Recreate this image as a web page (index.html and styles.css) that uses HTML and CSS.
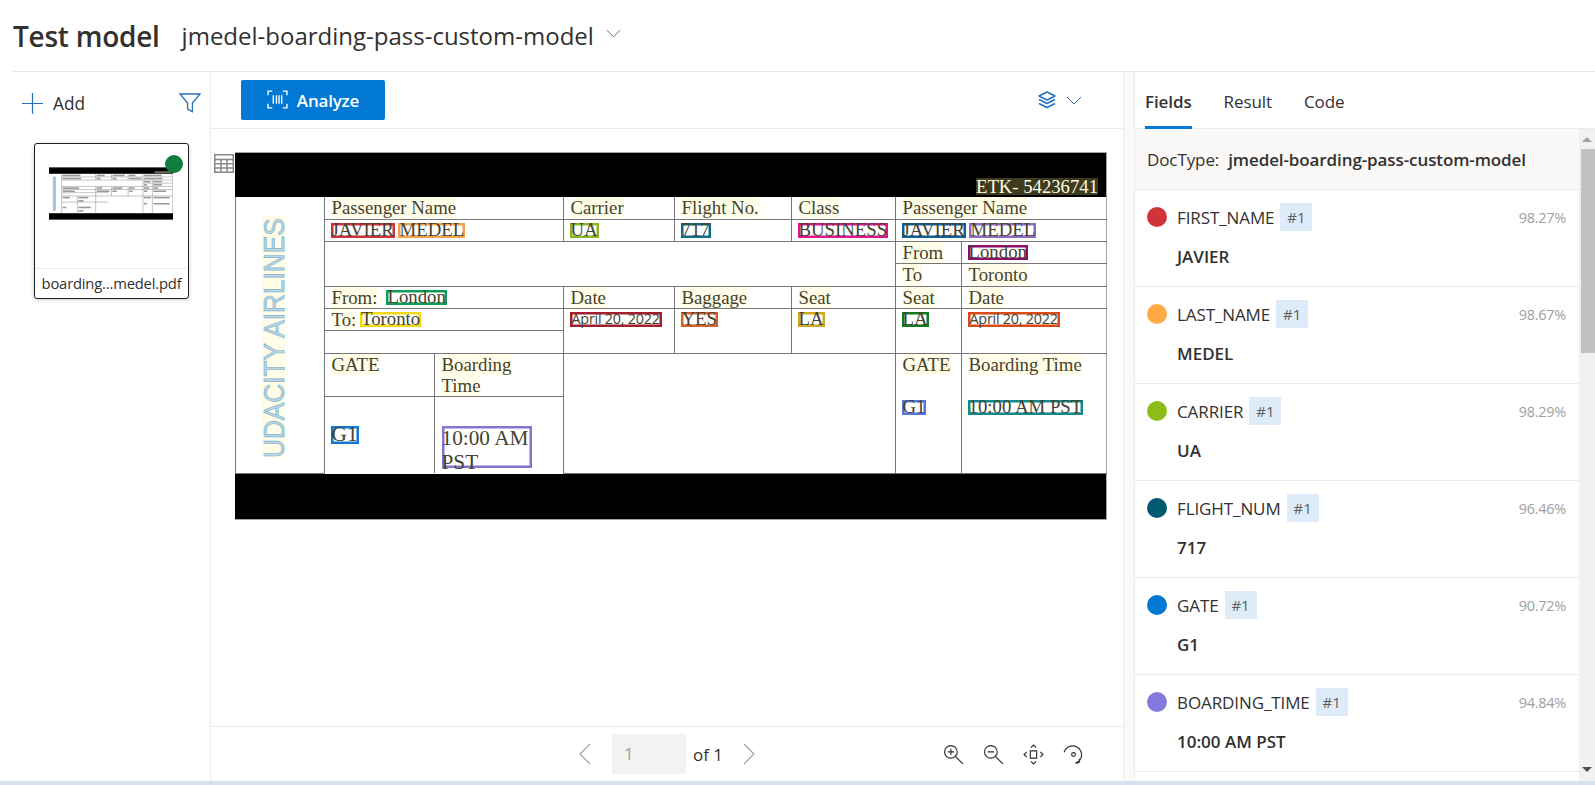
FILE: index.html
```html
<!DOCTYPE html>
<html lang="en">
<head>
<meta charset="utf-8">
<title>Test model</title>
<link rel="stylesheet" href="styles.css">
</head>
<body>
<div class="app">
  <header class="header">
    <h1 class="title">Test model</h1>
    <span class="model-name">jmedel-boarding-pass-custom-model</span>
    <svg class="model-chevron" viewBox="0 0 16 9"><path d="M1 1l7 7 7-7" fill="none" stroke="#605e5c" stroke-width="1"/></svg>
  </header>
  <main class="panes">
    <aside class="files">
      <div class="files-bar">
        <svg class="ico-plus" viewBox="0 0 22 22"><path d="M11 0v22M0 11h22" stroke="#2b6fb8" stroke-width="1.3" fill="none"/></svg>
        <span class="add-label">Add</span>
        <svg class="ico-filter" viewBox="0 0 22 20"><path d="M1 1h20l-7.6 9v8.6l-4.8-2.6v-6z" stroke="#2b6fb8" stroke-width="1.3" fill="none"/></svg>
      </div>
      <div class="card">
        <div class="thumb">
          <svg class="thumb-doc" viewBox="0 0 871 367" aria-hidden="true">
            <rect width="871" height="367" fill="#fff"/>
            <rect width="871" height="45" fill="#000"/>
            <rect y="322" width="871" height="45" fill="#000"/>
            <g stroke="#999" stroke-width="4" fill="none">
              <path d="M89 45v277M89 67h782M89 89h782M660 111h211M89 134h782M89 156h782M89 178h328M89 201h782M89 244h328M199 201v121M328 45v44M328 134v188M439 45v44M439 134v67M556 45v44M556 134v67M660 45v277M726 89v233M869 45v277"/>
            </g>
            <g fill="#666" opacity=".65">
              <rect x="96" y="51" width="125" height="11"/><rect x="96" y="73" width="130" height="11"/>
              <rect x="335" y="51" width="55" height="11"/><rect x="335" y="73" width="28" height="11"/>
              <rect x="446" y="51" width="85" height="11"/><rect x="446" y="73" width="28" height="11"/>
              <rect x="563" y="51" width="45" height="11"/><rect x="563" y="73" width="88" height="11"/>
              <rect x="667" y="51" width="125" height="11"/><rect x="667" y="73" width="130" height="11"/>
              <rect x="667" y="95" width="45" height="11"/><rect x="733" y="95" width="60" height="11"/>
              <rect x="667" y="117" width="22" height="11"/><rect x="733" y="117" width="60" height="11"/>
              <rect x="96" y="140" width="115" height="11"/><rect x="96" y="162" width="85" height="11"/>
              <rect x="335" y="140" width="38" height="11"/><rect x="335" y="162" width="90" height="11"/>
              <rect x="446" y="140" width="70" height="11"/><rect x="446" y="162" width="30" height="11"/>
              <rect x="563" y="140" width="38" height="11"/><rect x="563" y="162" width="24" height="11"/>
              <rect x="667" y="140" width="38" height="11"/><rect x="667" y="162" width="24" height="11"/>
              <rect x="733" y="140" width="35" height="11"/><rect x="733" y="162" width="90" height="11"/>
              <rect x="96" y="207" width="50" height="11"/><rect x="206" y="207" width="70" height="11"/><rect x="206" y="229" width="36" height="11"/>
              <rect x="96" y="276" width="26" height="11"/><rect x="206" y="276" width="88" height="11"/><rect x="206" y="300" width="36" height="11"/>
              <rect x="667" y="207" width="50" height="11"/><rect x="733" y="207" width="115" height="11"/>
              <rect x="667" y="250" width="22" height="11"/><rect x="733" y="250" width="115" height="11"/>
            </g>
            <rect x="742" y="27" width="120" height="14" fill="#6b6a55"/>
            <rect x="27" y="65" width="22" height="240" fill="#9fc5ea"/>
          </svg>
          <span class="status-dot"></span>
        </div>
        <div class="card-label">boarding...medel.pdf</div>
      </div>
    </aside>

    <section class="viewer">
      <div class="toolbar">
        <button class="analyze" type="button">
          <svg class="ico-scan" viewBox="0 0 20 18"><path d="M1 5V1h4M15 1h4v4M1 13v4h4M15 17h4v-4M6 5v8M9 5v8M11.500 5v8M14 5v8" stroke="#fff" stroke-width="1.300" fill="none"/></svg>
          <span class="analyze-label">Analyze</span>
        </button>
        <svg class="ico-layers" viewBox="0 0 20 18"><path d="M10 1l8 4-8 4-8-4zM2 8.500l8 4 8-4M2 12.500l8 4 8-4" stroke="#1f6fc2" stroke-width="1.400" fill="none" stroke-linejoin="round"/></svg>
        <svg class="ico-chev" viewBox="0 0 16 9"><path d="M1 1l7 7 7-7" fill="none" stroke="#3d6fa8" stroke-width="1"/></svg>
      </div>
      <div class="canvas">
        <svg class="ico-table" viewBox="0 0 20 19"><path d="M.75.75h18.500v17.500H.75zM.75 5.500h18.500M.75 9.800h18.500M.75 14h18.500M7 5.500v12.700M13 5.500v12.700" stroke="#8a8886" stroke-width="1.500" fill="none"/></svg>
        <div class="doc">
          <div class="band band-top"><span class="etk">ETK- 54236741</span></div>
          <table class="ticket">
            <colgroup>
              <col class="c1"><col class="c2"><col class="c3"><col class="c4"><col class="c5"><col class="c6"><col class="c7"><col class="c8">
            </colgroup>
            <tr class="r1">
              <td rowspan="9" class="logo-cell"><span class="logo"><span class="logo-text">UDACITY AIRLINES</span></span></td>
              <td colspan="2"><span class="t">Passenger Name</span></td>
              <td><span class="t">Carrier</span></td>
              <td><span class="t">Flight No.</span></td>
              <td><span class="t">Class</span></td>
              <td colspan="2"><span class="t">Passenger Name</span></td>
            </tr>
            <tr class="r2">
              <td colspan="2"><span class="box red">JAVIER</span> <span class="box orange">MEDEL</span></td>
              <td><span class="box lime">UA</span></td>
              <td><span class="box teal">717</span></td>
              <td><span class="box pink">BUSINESS</span></td>
              <td colspan="2"><span class="box navy">JAVIER</span> <span class="box violet">MEDEL</span></td>
            </tr>
            <tr class="r3">
              <td colspan="5" rowspan="2"></td>
              <td><span class="t">From</span></td>
              <td><span class="box plum">London</span></td>
            </tr>
            <tr class="r4">
              <td><span class="t">To</span></td>
              <td><span class="t">Toronto</span></td>
            </tr>
            <tr class="r5">
              <td colspan="2"><span class="t">From:</span><span class="box green gap-from">London</span></td>
              <td><span class="t">Date</span></td>
              <td><span class="t">Baggage</span></td>
              <td><span class="t">Seat</span></td>
              <td><span class="t">Seat</span></td>
              <td><span class="t">Date</span></td>
            </tr>
            <tr class="r6">
              <td colspan="2"><span class="t">To:</span> <span class="box yellow">Toronto</span></td>
              <td rowspan="2"><span class="box wine sans">April 20, 2022</span></td>
              <td rowspan="2"><span class="box rust">YES</span></td>
              <td rowspan="2"><span class="box gold">LA</span></td>
              <td rowspan="2"><span class="box forest">LA</span></td>
              <td rowspan="2"><span class="box ember sans">April 20, 2022</span></td>
            </tr>
            <tr class="r7"><td colspan="2"></td></tr>
            <tr class="r8">
              <td><span class="t">GATE</span></td>
              <td><span class="t">Boarding<br>Time</span></td>
              <td colspan="3" rowspan="2"></td>
              <td rowspan="2"><span class="t">GATE</span><span class="box periwinkle below">G1</span></td>
              <td rowspan="2"><span class="t">Boarding Time</span><span class="box cyan below">10:00 AM PST</span></td>
            </tr>
            <tr class="r9">
              <td><span class="box azure large">G1</span></td>
              <td><span class="box lilac large tall">10:00 AM PST</span></td>
            </tr>
          </table>
          <div class="band band-bottom"></div>
        </div>
      </div>
      <footer class="pager">
        <svg class="ico-page" viewBox="0 0 12 22"><path d="M11 1L1 11l10 10" fill="none" stroke="#a19f9d" stroke-width="1.200"/></svg>
        <span class="page-input">1</span>
        <span class="page-of">of 1</span>
        <svg class="ico-page page-next" viewBox="0 0 12 22"><path d="M1 1l10 10L1 21" fill="none" stroke="#a19f9d" stroke-width="1.200"/></svg>
        <div class="page-tools">
          <svg class="ico-tool" viewBox="0 0 20 20"><circle cx="7.500" cy="7.500" r="6" fill="none" stroke="#323130" stroke-width="1.100"/><path d="M12 12l7 7M4.500 7.500h6M7.500 4.500v6" stroke="#323130" stroke-width="1.100" fill="none"/></svg>
          <svg class="ico-tool" viewBox="0 0 20 20"><circle cx="7.500" cy="7.500" r="6" fill="none" stroke="#323130" stroke-width="1.100"/><path d="M12 12l7 7M4.500 7.500h6" stroke="#323130" stroke-width="1.100" fill="none"/></svg>
          <svg class="ico-tool" viewBox="0 0 20 20"><path d="M7 6.500h6v7H7zM7.500 3.500L10 1l2.500 2.500M7.500 16.500L10 19l2.500-2.500M3.500 7.500L1 10l2.500 2.500M16.500 7.500L19 10l-2.500 2.500" fill="none" stroke="#323130" stroke-width="1.100"/></svg>
          <svg class="ico-tool" viewBox="0 0 20 20"><path d="M1 8a8.500 8.500 0 1 1 14 8.500l-3 1.500M15.500 14v3.500l-3.500 1" fill="none" stroke="#323130" stroke-width="1.100"/><circle cx="10" cy="10" r="1.800" fill="none" stroke="#323130" stroke-width="1.100"/></svg>
        </div>
      </footer>
    </section>

    <div class="splitter"></div>

    <section class="results">
      <nav class="tabs">
        <span class="tab tab-active">Fields</span>
        <span class="tab">Result</span>
        <span class="tab">Code</span>
      </nav>
      <div class="results-body">
        <div class="fields">
          <div class="doctype"><span class="doctype-key">DocType:</span><strong class="doctype-val">jmedel-boarding-pass-custom-model</strong></div>
          <div class="field">
            <div class="field-head"><span class="dot d-red"></span><span class="field-name">FIRST_NAME</span><span class="chip">#1</span><span class="pct">98.27%</span></div>
            <div class="field-val">JAVIER</div>
          </div>
          <div class="field">
            <div class="field-head"><span class="dot d-orange"></span><span class="field-name">LAST_NAME</span><span class="chip">#1</span><span class="pct">98.67%</span></div>
            <div class="field-val">MEDEL</div>
          </div>
          <div class="field">
            <div class="field-head"><span class="dot d-lime"></span><span class="field-name">CARRIER</span><span class="chip">#1</span><span class="pct">98.29%</span></div>
            <div class="field-val">UA</div>
          </div>
          <div class="field">
            <div class="field-head"><span class="dot d-teal"></span><span class="field-name">FLIGHT_NUM</span><span class="chip">#1</span><span class="pct">96.46%</span></div>
            <div class="field-val">717</div>
          </div>
          <div class="field">
            <div class="field-head"><span class="dot d-blue"></span><span class="field-name">GATE</span><span class="chip">#1</span><span class="pct">90.72%</span></div>
            <div class="field-val">G1</div>
          </div>
          <div class="field">
            <div class="field-head"><span class="dot d-purple"></span><span class="field-name">BOARDING_TIME</span><span class="chip">#1</span><span class="pct">94.84%</span></div>
            <div class="field-val">10:00 AM PST</div>
          </div>
        </div>
        <div class="scrollbar">
          <span class="arrow-up"></span>
          <span class="thumb-bar"></span>
          <span class="arrow-down"></span>
        </div>
      </div>
    </section>
  </main>
  <div class="page-edge"></div>
</div>
</body>
</html>
```

FILE: styles.css
```css
* { box-sizing: border-box; }
html, body { margin: 0; height: 100%; }
body {
  font-family: "Open Sans", "Noto Sans", sans-serif;
  color: #323130;
  background: #fff;
  overflow: hidden;
}
.app { width: 1595px; height: 785px; display: flex; flex-direction: column; overflow: hidden; }

/* header */
.header {
  height: 72px;
  margin-left: 13px;
  display: flex;
  align-items: center;
  border-bottom: 1px solid #e6e5e4;
  flex: none;
}
.title { margin: 0; font-size: 28px; font-weight: 600; letter-spacing: -.25px; color: #323130; }
.model-name { margin-left: 22px; font-size: 24px; font-weight: 400; color: #323130; }
.model-chevron { width: 15px; height: 9px; margin-left: 12px; margin-top: -4px; }

.panes { flex: 1; display: flex; min-height: 0; }

/* file list */
.files { width: 211px; flex: none; border-right: 1px solid #edebe9; padding-left: 22px; }
.files-bar { height: 60px; display: flex; align-items: center; padding-top: 2px; padding-right: 9px; }
.ico-plus { width: 21px; height: 21px; }
.add-label { margin-left: 10px; font-size: 17.3px; }
.ico-filter { width: 22px; height: 20px; margin-left: auto; }
.card {
  width: 155px;
  height: 156px;
  margin: 11px 0 0 12px;
  border: 1px solid #201f1e;
  border-radius: 3px;
  box-shadow: 0 1px 4px rgba(0,0,0,.2);
  display: flex;
  flex-direction: column;
  background: #fff;
}
.thumb { height: 125px; position: relative; padding: 23px 0 0 14px; border-bottom: 1px solid #edebe9; }
.thumb-doc { display: block; width: 124px; height: 53px; }
.status-dot { position: absolute; right: 5px; top: 11px; width: 18px; height: 18px; border-radius: 50%; background: #107c41; }
.card-label { text-align: center; font-size: 14.8px; letter-spacing: -.2px; line-height: 28px; }

/* viewer */
.viewer { width: 912px; flex: none; display: flex; flex-direction: column; }
.toolbar {
  height: 57px;
  flex: none;
  display: flex;
  align-items: center;
  padding: 0 41px 0 30px;
  border-bottom: 1px solid #edebe9;
}
.analyze {
  width: 144px;
  height: 40px;
  margin-top: -1px;
  border: 0;
  border-radius: 2px;
  background: #0078d4;
  color: #fff;
  font: 600 17px "Open Sans", sans-serif;
  letter-spacing: -.2px;
  display: flex;
  align-items: center;
  justify-content: center;
  gap: 9px;
}
.analyze-label { padding-top: 2px; }
.ico-scan { width: 21px; height: 19px; }
.ico-layers { width: 20px; height: 18px; margin-left: auto; }
.ico-chev { width: 16px; height: 9px; margin-left: 9px; }

.canvas { flex: 1; min-height: 0; position: relative; padding: 23px 0 0 24px; }
.ico-table { position: absolute; left: 3px; top: 25px; width: 20px; height: 19px; }
.doc { width: 872px; border-right: 1px solid #a5a5a5; }
.band { background: #000; height: 45px; position: relative; }
.band-top { border-top: 1px solid #a5a5a5; }
.band-bottom { height: 46px; border-bottom: 1px solid #a5a5a5; }
.etk {
  position: absolute;
  right: 8px;
  top: 25px;
  font: 18.7px/17px "Liberation Serif", serif;
  color: #fffde6;
  background: #3d3a1e;
}

.ticket {
  width: 871px;
  table-layout: fixed;
  border-collapse: collapse;
  font: 18.8px/21px "Liberation Serif", serif;
  color: #45422f;
}
.c1 { width: 89px; } .c2 { width: 110px; } .c3 { width: 129px; } .c4 { width: 111px; }
.c5 { width: 117px; } .c6 { width: 104px; } .c7 { width: 66px; } .c8 { width: 145px; }
.ticket td { border: 1px solid #777; padding: 0 0 0 6.500px; vertical-align: top; overflow: visible; white-space: nowrap; }
.ticket tr:first-child td { border-top: 0; }
.ticket tr:last-child td { border-bottom: 0; }
.ticket td:last-child { border-right: 0; }
.r1 { height: 22px; } .r2 { height: 22px; } .r3 { height: 22px; } .r4 { height: 23px; }
.r5 { height: 22px; } .r6 { height: 22px; } .r7 { height: 23px; } .r8 { height: 43px; } .r9 { height: 77px; }
.t { background: #fffde8; }

.ticket td.logo-cell { padding: 19px 0 0 26px; }
.logo {
  display: block;
  transform: rotate(180deg);
  background: #fffde8;
  width: 23px;
  height: 242px;
}
.logo-text {
  display: block;
  writing-mode: vertical-rl;
  transform-origin: top center;
  transform: scaleY(.873);
  font: 30px/23px "Liberation Sans", sans-serif;
  color: #bcd8e6;
  -webkit-text-stroke: .7px #7fb0cc;
  white-space: nowrap;
}

.box { display: inline-block; height: 15px; line-height: 14px; vertical-align: top; margin: 3px 0 0 -1px; padding: 0 1px; box-shadow: inset 0 0 0 2.500px var(--c); }
.below { display: block; width: fit-content; margin-top: 25px; }
.sans { font: 14.4px/14px "Open Sans", sans-serif; letter-spacing: -.25px; padding: 0 2px; }
.large { font-size: 21.3px; height: 18px; line-height: 17px; margin-top: 29px; }
.tall { height: 42px; width: 90px; white-space: normal; line-height: 24px; padding-left: 0; margin-left: 0; }
.gap-from { margin-left: 9px; }
.red { --c: #c8323c; } .orange { --c: #f2a24b; } .lime { --c: #8ab51f; } .teal { --c: #0f6c82; }
.pink { --c: #e0148c; } .navy { --c: #0f5f96; } .violet { --c: #8b6cc0; } .plum { --c: #8b0e68; }
.green { --c: #0f9d58; } .yellow { --c: #f5d80f; } .wine { --c: #a31f2e; } .rust { --c: #d3622a; }
.gold { --c: #cfaa1f; } .forest { --c: #0f7a1f; } .ember { --c: #d94a14; } .azure { --c: #0f78d4; }
.lilac { --c: #8674d2; } .periwinkle { --c: #5b72e0; } .cyan { --c: #0e8a8a; }

/* pager */
.pager {
  height: 55px;
  flex: none;
  border-top: 1px solid #edebe9;
  display: flex;
  align-items: center;
  padding-left: 368px;
}
.ico-page { width: 12px; height: 22px; }
.page-input {
  width: 74px;
  height: 40px;
  margin-left: 21px;
  padding-left: 12px;
  background: #f3f2f1;
  color: #a19f9d;
  font-size: 17px;
  line-height: 40px;
}
.page-of { margin-left: 7px; font-size: 17px; }
.page-next { margin-left: 20px; }
.page-tools { margin-left: auto; margin-right: 39px; display: flex; gap: 19px; }
.ico-tool { width: 21px; height: 21px; display: block; }

.splitter { width: 12px; flex: none; background: #faf9f8; border-left: 1px solid #edebe9; border-right: 1px solid #edebe9; }

/* results */
.results { flex: 1; min-width: 0; display: flex; flex-direction: column; }
.tabs { height: 57px; flex: none; display: flex; gap: 32px; padding-left: 10px; border-bottom: 1px solid #edebe9; }
.tab { font-size: 17px; line-height: 60px; letter-spacing: -.1px; height: 57px; }
.tab-active { font-weight: 600; border-bottom: 3px solid #0078d4; }
.results-body { flex: 1; min-height: 0; display: flex; }
.fields { flex: 1; min-width: 0; overflow: hidden; }
.doctype { height: 61px; background: #faf9f8; border-bottom: 1px solid #edebe9; padding-left: 12px; line-height: 62px; font-size: 17px; letter-spacing: -.1px; white-space: nowrap; }
.doctype-key { color: #323130; }
.doctype-val { margin-left: 9px; font-weight: 600; }
.field { height: 97px; border-bottom: 1px solid #edebe9; padding: 13px 13px 0 12px; }
.field-head { display: flex; align-items: center; height: 28px; }
.dot { width: 20px; height: 20px; border-radius: 50%; flex: none; }
.d-red { background: #d13438; } .d-orange { background: #ffaa44; } .d-lime { background: #8cbd18; }
.d-teal { background: #005b70; } .d-blue { background: #0078d4; } .d-purple { background: #8378de; }
.field-name { margin-left: 10px; font-size: 17px; letter-spacing: -.1px; }
.chip { margin-left: 6px; width: 32px; height: 28px; background: #deecf9; color: #605e5c; font-size: 15px; line-height: 28px; text-align: center; }
.pct { margin-left: auto; color: #a19f9d; font-size: 14.5px; letter-spacing: -.3px; }
.field-val { margin: 15px 0 0 30px; font-size: 17px; line-height: 22px; font-weight: 600; }

.scrollbar { width: 16px; flex: none; background: #f1f1f1; position: relative; }
.arrow-up, .arrow-down { position: absolute; left: 3px; width: 0; height: 0; border-left: 5px solid transparent; border-right: 5px solid transparent; }
.arrow-up { top: 8px; border-bottom: 5px solid #a3a3a3; }
.arrow-down { top: 638px; border-top: 5px solid #505050; }
.thumb-bar { position: absolute; left: 2px; right: 0; top: 20px; height: 204px; background: #c1c1c1; }

.page-edge { height: 4px; flex: none; background: #d7e0f1; }
```
